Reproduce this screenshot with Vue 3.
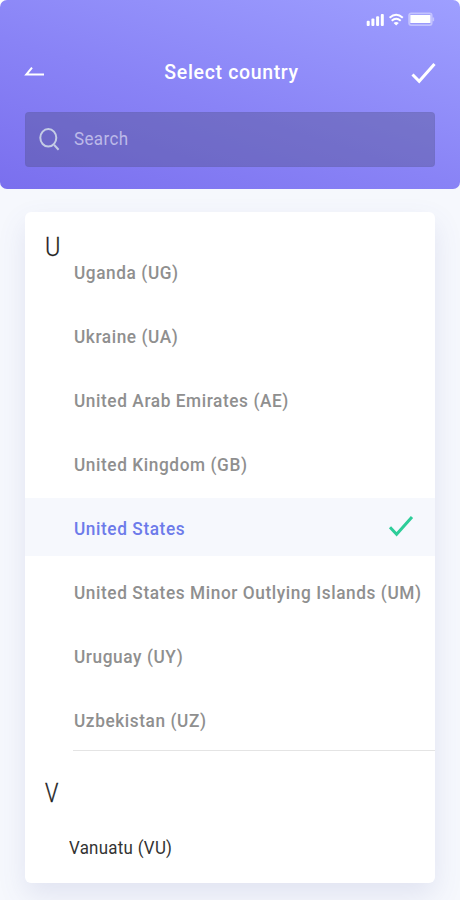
<script setup>
const countries = [
  { name: 'Uganda (UG)' },
  { name: 'Ukraine (UA)' },
  { name: 'United Arab Emirates (AE)' },
  { name: 'United Kingdom (GB)' },
  { name: 'United States', selected: true },
  { name: 'United States Minor Outlying Islands (UM)' },
  { name: 'Uruguay (UY)' },
  { name: 'Uzbekistan (UZ)' }
]
</script>

<template>
  <main class="screen">
    <header class="header">
      <div class="status">
        <svg width="69" height="16" viewBox="0 0 69 16" fill="none">
          <g fill="#fff">
            <rect x="0.7" y="8.7" width="3" height="5.3" rx="1" />
            <rect x="5.4" y="6.6" width="3" height="7.4" rx="1" />
            <rect x="10.1" y="4.3" width="3" height="9.7" rx="1" />
            <rect x="14.8" y="2" width="3" height="12" rx="1" />
            <path d="M27.6 10.9Q30.2 8.9 32.8 10.9L30.2 13.6Z" />
            <rect x="44.3" y="3" width="20.2" height="8" rx="0.6" />
          </g>
          <path d="M23.6 5.7Q30.2 -.1 36.8 5.7M25.7 8.8Q30.2 4.7 34.7 8.8" stroke="#fff" stroke-width="2" />
          <rect x="43.1" y="1.3" width="22.6" height="11.8" rx="2" stroke="#fff" stroke-opacity=".4" stroke-width="1.8" />
          <path d="M67.4 5.5V9.2" stroke="#fff" stroke-opacity=".4" stroke-width="1.5" />
        </svg>
      </div>
      <div class="titlebar">
        <svg class="back" width="22" height="12" viewBox="0 0 22 12">
          <path d="M20 8.6H2.3L8 1.6" fill="none" stroke="#fff" stroke-width="2" />
        </svg>
        <h1>Select country</h1>
        <svg class="confirm" width="26" height="22" viewBox="0 0 26 22">
          <path d="M1.5 12.5L8.2 19.3L23.5 2" fill="none" stroke="#fff" stroke-width="3" />
        </svg>
      </div>
      <div class="search">
        <svg width="22" height="24" viewBox="0 0 22 24" fill="none" stroke="#c4cce5" stroke-width="2">
          <ellipse cx="9.3" cy="10.8" rx="8" ry="8.8" />
          <path d="M15.2 18L19.6 22.8" />
        </svg>
        <span>Search</span>
      </div>
    </header>

    <section class="card">
      <h2 class="letter letter-u">U</h2>
      <ul>
        <li v-for="c in countries" :key="c.name" :class="{ selected: c.selected }">
          <span>{{ c.name }}</span>
          <svg v-if="c.selected" width="26" height="22" viewBox="0 0 26 22">
            <path d="M2 12.3L8.6 19.2L24 2" fill="none" stroke="#2dcd99" stroke-width="3" />
          </svg>
        </li>
      </ul>
      <div class="divider"></div>
      <h2 class="letter letter-v">V</h2>
      <p class="vanuatu">Vanuatu (VU)</p>
    </section>
  </main>
</template>

<style>
body {
  background: #fff;
}
</style>

<style scoped>
.screen {
  box-sizing: border-box;
  height: 900px;
  overflow: hidden;
  background: linear-gradient(#fff 0 10px, #f6f8fd 10px);
  font-family: Roboto, "Liberation Sans", sans-serif;
}
.header {
  box-sizing: border-box;
  height: 189px;
  padding: 0 25px;
  border-radius: 7px;
  background: linear-gradient(18deg, #7a6fee 0%, #8983f6 45%, #9e9fff 100%);
}
.status {
  display: flex;
  justify-content: flex-end;
  height: 28px;
  padding-top: 12px;
  box-sizing: border-box;
}
.titlebar {
  display: flex;
  align-items: center;
  justify-content: space-between;
  height: 83.5px;
  padding-top: 5px;
  box-sizing: border-box;
}
.back {
  margin-left: -1.5px;
}
.confirm {
  margin: 2px -1.5px 0 0;
}
h1 {
  margin: 0;
  padding-left: 7px;
  color: #fff;
  font-size: 20.5px;
  font-weight: 500;
  line-height: 24px;
  letter-spacing: 0.7px;
  transform: scaleX(0.95);
}
.search {
  display: flex;
  align-items: center;
  gap: 13.5px;
  box-sizing: border-box;
  height: 55.5px;
  padding-left: 12.5px;
  border-radius: 4px;
  background: rgba(75, 75, 125, 0.36);
  border: 1px solid rgba(90, 90, 150, 0.08);
  color: #bcb9e8;
  font-size: 18.8px;
  letter-spacing: 0.4px;
}
.search span,
li span,
.letter,
.vanuatu {
  transform: scaleX(0.919);
  transform-origin: left center;
}
.search span {
  transform: scaleX(0.905);
}
.card {
  box-sizing: border-box;
  height: 671px;
  margin: 23px 25px 0;
  padding-top: 20px;
  border-radius: 6px;
  background: #fff;
  box-shadow: 0 12px 28px rgba(83, 90, 160, 0.13);
}
.letter {
  margin: 0 0 0 19.5px;
  color: #222;
  font-size: 25.5px;
  font-weight: 300;
  line-height: 30px;
  -webkit-text-stroke: 0.3px #222;
}
.letter-u {
  height: 9.5px;
}
ul {
  margin: 0;
  padding: 0;
  list-style: none;
}
li {
  display: flex;
  align-items: center;
  justify-content: space-between;
  box-sizing: border-box;
  height: 58px;
  margin-bottom: 6px;
  padding: 5px 21.5px 0 48.7px;
  color: #8f8f8f;
  font-size: 18.8px;
  font-weight: 500;
  letter-spacing: 0.63px;
  white-space: nowrap;
}
li svg {
  margin-top: -7px;
}
.selected {
  background: #f6f8fd;
  color: #6d7bea;
}
.divider {
  height: 1px;
  margin: -4px 0 0 48px;
  background: #e4e4e4;
}
.letter-v {
  padding-top: 27px;
  transform: scaleX(0.85);
}
.vanuatu {
  margin: 28px 0 0 43.5px;
  color: #333;
  font-size: 18.8px;
  line-height: 24px;
  letter-spacing: 0.3px;
  transform: scaleX(0.9);
}
</style>
